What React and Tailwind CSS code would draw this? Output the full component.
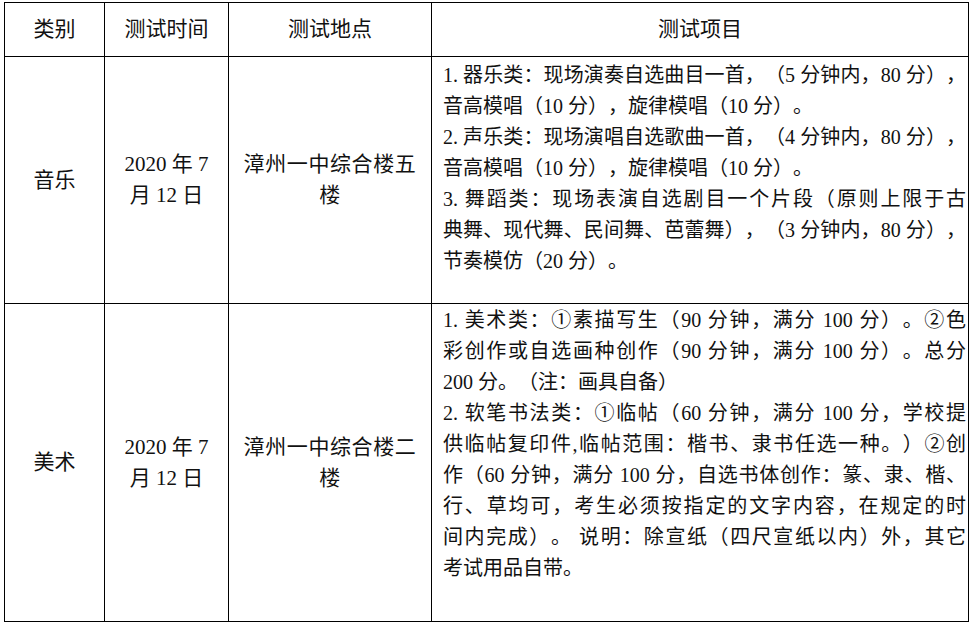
import React from "react";

const font = "font-['Liberation_Serif','Noto_Sans_CJK_SC',serif]";

function Lines({ lines }) {
  return (
    <div className="flex flex-col">
      {lines.map(([t, j], i) => (
        <div
          key={i}
          className={
            "whitespace-nowrap " +
            (j ? "text-justify [text-align-last:justify]" : "text-left")
          }
        >
          {t}
        </div>
      ))}
    </div>
  );
}

const music = [
  ["1. 器乐类：现场演奏自选曲目一首，（5 分钟内，80 分），", true],
  ["音高模唱（10 分），旋律模唱（10 分）。", false],
  ["2. 声乐类：现场演唱自选歌曲一首，（4 分钟内，80 分），", true],
  ["音高模唱（10 分），旋律模唱（10 分）。", false],
  ["3. 舞蹈类：现场表演自选剧目一个片段（原则上限于古", true],
  ["典舞、现代舞、民间舞、芭蕾舞），（3 分钟内，80 分），", true],
  ["节奏模仿（20 分）。", false],
];

const art = [
  ["1. 美术类：①素描写生（90 分钟，满分 100 分）。②色", true],
  ["彩创作或自选画种创作（90 分钟，满分 100 分）。总分", true],
  ["200 分。（注：画具自备）", false],
  ["2. 软笔书法类：①临帖（60 分钟，满分 100 分，学校提", true],
  ["供临帖复印件,临帖范围：楷书、隶书任选一种。）②创", true],
  ["作（60 分钟，满分 100 分，自选书体创作：篆、隶、楷、", true],
  ["行、草均可，考生必须按指定的文字内容，在规定的时", true],
  ["间内完成）。 说明：除宣纸（四尺宣纸以内）外，其它", true],
  ["考试用品自带。", false],
];

export default function App() {
  const cell = "border-r border-b border-black";
  const center = "flex items-center justify-center text-center";
  return (
    <div className={"w-[974px] h-[626px] bg-white overflow-hidden text-[#111] [text-spacing-trim:space-all] " + font}>
      <div className="ml-[4px] mt-[2px] grid w-[965px] grid-cols-[100px_124px_203px_537px] grid-rows-[54px_247px_318px] border-l border-t border-black">
        <div className={cell + " " + center + " text-[21px]"}>类别</div>
        <div className={cell + " " + center + " text-[21px]"}>测试时间</div>
        <div className={cell + " " + center + " text-[21px]"}>测试地点</div>
        <div className={cell + " " + center + " text-[21px]"}>测试项目</div>

        <div className={cell + " " + center + " text-[21px] leading-[31px]"}>音乐</div>
        <div className={cell + " " + center + " text-[21px] leading-[31px]"}>
          <div>2020 年 7<br />月 12 日</div>
        </div>
        <div className={cell + " " + center + " text-[21px] leading-[31px] tracking-[0.6px]"}>
          <div>漳州一中综合楼五<br />楼</div>
        </div>
        <div className={cell + " pl-[11px] pr-[2px] pt-[3px] text-[20px] leading-[31px]"}>
          <Lines lines={music} />
        </div>

        <div className={cell + " " + center + " text-[21px] leading-[31px]"}>美术</div>
        <div className={cell + " " + center + " text-[21px] leading-[31px]"}>
          <div>2020 年 7<br />月 12 日</div>
        </div>
        <div className={cell + " " + center + " text-[21px] leading-[31px] tracking-[0.6px]"}>
          <div>漳州一中综合楼二<br />楼</div>
        </div>
        <div className={cell + " pl-[11px] pr-[2px] pt-[1px] text-[20px] leading-[31px]"}>
          <Lines lines={art} />
        </div>
      </div>
    </div>
  );
}
